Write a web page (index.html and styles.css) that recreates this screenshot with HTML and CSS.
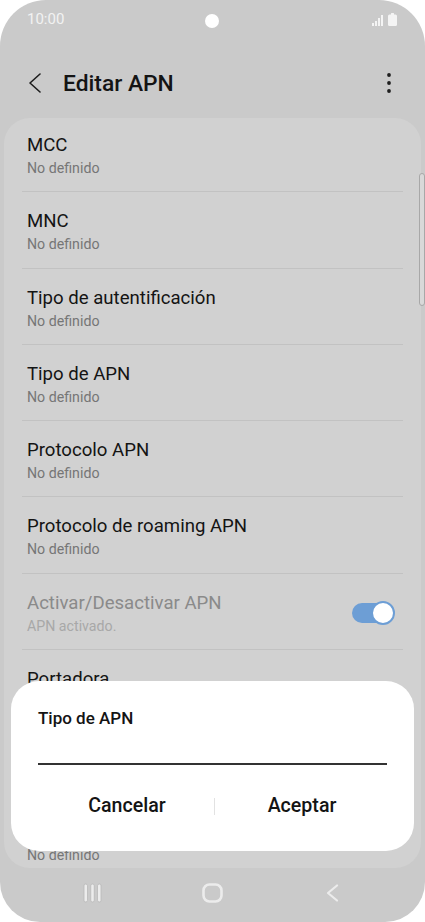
FILE: index.html
```html
<!DOCTYPE html>
<html lang="es">
<head>
    <meta charset="UTF-8">
    <meta name="viewport" content="width=device-width, initial-scale=1.0">
    <title>Editar APN</title>
    <link rel="stylesheet" href="styles.css">
</head>
<body>
    <div class="screen">
        <div class="status-bar">
            <span class="clock">10:00</span>
            <span class="camera"></span>
            <span class="status-icons">
                <svg width="12" height="11" viewBox="0 0 12 11">
                    <rect x="0" y="8" width="2" height="3" fill="#f4f4f4"/>
                    <rect x="3" y="6" width="2" height="5" fill="#f4f4f4"/>
                    <rect x="6" y="3" width="2" height="8" fill="#f4f4f4"/>
                    <rect x="9" y="0" width="2" height="11" fill="#f4f4f4"/>
                </svg>
                <svg width="9" height="13" viewBox="0 0 9 13">
                    <rect x="3" y="0" width="3" height="2" rx="0.5" fill="#f4f4f4"/>
                    <rect x="0" y="1.5" width="9" height="11.5" rx="1.5" fill="#f4f4f4"/>
                </svg>
            </span>
        </div>

        <header class="app-bar">
            <svg class="back" width="14" height="20" viewBox="0 0 14 20">
                <polyline points="12,1 2,10 12,19" fill="none" stroke="#1e1e1e" stroke-width="1.6" stroke-linecap="round" stroke-linejoin="round"/>
            </svg>
            <h1>Editar APN</h1>
            <svg class="more" width="6" height="20" viewBox="0 0 6 20">
                <circle cx="3" cy="2" r="1.9" fill="#1e1e1e"/>
                <circle cx="3" cy="10" r="1.9" fill="#1e1e1e"/>
                <circle cx="3" cy="18" r="1.9" fill="#1e1e1e"/>
            </svg>
        </header>

        <div class="list-card">
            <div class="item">
                <div class="item-title">MCC</div>
                <div class="item-sub">No definido</div>
            </div>
            <div class="item">
                <div class="item-title">MNC</div>
                <div class="item-sub">No definido</div>
            </div>
            <div class="item">
                <div class="item-title">Tipo de autentificación</div>
                <div class="item-sub">No definido</div>
            </div>
            <div class="item">
                <div class="item-title">Tipo de APN</div>
                <div class="item-sub">No definido</div>
            </div>
            <div class="item">
                <div class="item-title">Protocolo APN</div>
                <div class="item-sub">No definido</div>
            </div>
            <div class="item">
                <div class="item-title">Protocolo de roaming APN</div>
                <div class="item-sub">No definido</div>
            </div>
            <div class="item item-switch disabled">
                <div class="item-text">
                    <div class="item-title">Activar/Desactivar APN</div>
                    <div class="item-sub">APN activado.</div>
                </div>
                <span class="toggle"><span class="knob"></span></span>
            </div>
            <div class="item">
                <div class="item-title">Portadora</div>
                <div class="item-sub">No especificado</div>
            </div>
            <div class="item">
                <div class="item-title">Tipo MVNO</div>
                <div class="item-sub">Ninguno</div>
            </div>
            <div class="item">
                <div class="item-title">Valor MVNO</div>
                <div class="item-sub">No definido</div>
            </div>
        </div>

        <nav class="nav-bar">
            <svg width="19" height="20" viewBox="0 0 19 20">
                <rect x="1" y="1" width="3.5" height="18" rx="1.75" fill="#ececec" stroke="#b9b9b9" stroke-width="0.8"/>
                <rect x="7.75" y="1" width="3.5" height="18" rx="1.75" fill="#ececec" stroke="#b9b9b9" stroke-width="0.8"/>
                <rect x="14.5" y="1" width="3.5" height="18" rx="1.75" fill="#ececec" stroke="#b9b9b9" stroke-width="0.8"/>
            </svg>
            <svg width="21" height="20" viewBox="0 0 21 20">
                <rect x="1.5" y="1.5" width="18" height="17" rx="6" fill="none" stroke="#ececec" stroke-width="2.6"/>
            </svg>
            <svg width="13" height="18" viewBox="0 0 13 18">
                <polyline points="11,1.5 2,9 11,16.5" fill="none" stroke="#ececec" stroke-width="2.2" stroke-linecap="round" stroke-linejoin="round"/>
            </svg>
        </nav>

        <div class="scrollbar"></div>

        <div class="dialog">
            <div class="dialog-title">Tipo de APN</div>
            <div class="dialog-field"></div>
            <div class="dialog-actions">
                <button type="button" class="btn-text">Cancelar</button>
                <span class="actions-divider"></span>
                <button type="button" class="btn-text">Aceptar</button>
            </div>
        </div>
    </div>
</body>
</html>
```

FILE: styles.css
```css
body {
    margin: 0;
    padding: 0;
    background: #fff;
    font-family: Roboto, "Noto Sans", Arial, sans-serif;
    color: #141414;
}
.screen {
    position: relative;
    width: 425px;
    height: 922px;
    background: #cacaca;
    border-radius: 46px 46px 40px 40px;
    overflow: hidden;
    display: flex;
    flex-direction: column;
}
.status-bar {
    height: 38px;
    display: grid;
    grid-template-columns: 1fr auto 1fr;
    align-items: center;
    padding: 0 28px 0 27px;
}
.clock {
    font-size: 15px;
    color: #f2f2f2;
    margin-top: -1px;
}
.camera {
    width: 14px;
    height: 14px;
    border-radius: 50%;
    background: #fff;
    margin-top: 3px;
}
.status-icons {
    justify-self: end;
    display: flex;
    align-items: flex-end;
    gap: 4px;
    margin-top: 1px;
}
.app-bar {
    height: 80px;
    box-sizing: border-box;
    padding: 10px 33px 0 28px;
    display: flex;
    align-items: center;
}
.app-bar .back {
    margin-right: 21px;
}
.app-bar h1 {
    flex: 1;
    margin: 0;
    font-size: 22.8px;
    font-weight: 500;
    color: #141414;
}
.list-card {
    height: 750px;
    margin: 0 4px;
    background: #d1d1d1;
    border-radius: 26px;
    overflow: hidden;
}
.item {
    margin: 0 18px;
    padding: 17px 5px 14.3px;
    border-bottom: 1px solid #c2c2c2;
}
.item:first-child {
    padding-top: 15px;
}
.item-title {
    font-size: 18.6px;
    line-height: 24px;
    color: #141414;
}
.item-sub {
    margin-top: 2px;
    font-size: 14.2px;
    line-height: 18px;
    color: #767676;
}
.item-switch {
    display: flex;
    align-items: center;
    justify-content: space-between;
}
.disabled .item-title {
    color: #8a8a8a;
}
.disabled .item-sub {
    color: #a8a8a8;
}
.toggle {
    position: relative;
    width: 43px;
    height: 24px;
    margin-right: 3px;
    margin-top: 1px;
}
.toggle::before {
    content: "";
    position: absolute;
    left: 0;
    right: 4px;
    top: 2px;
    height: 20px;
    border-radius: 10px;
    background: #6d9ed5;
}
.knob {
    position: absolute;
    right: 0;
    top: 0;
    width: 20px;
    height: 20px;
    border-radius: 50%;
    background: #fff;
    border: 2px solid #6d9ed5;
}
.nav-bar {
    flex: 1;
    display: grid;
    grid-template-columns: repeat(3, 120px);
    justify-content: center;
    justify-items: center;
    align-items: center;
    padding-bottom: 4px;
}
.scrollbar {
    position: absolute;
    left: 419px;
    top: 173px;
    width: 6px;
    height: 133px;
    box-sizing: border-box;
    border: 1px solid #a8a8a8;
    border-radius: 3px;
    background: #d9d9d9;
}
.dialog {
    position: absolute;
    left: 11px;
    top: 681px;
    width: 403px;
    height: 170px;
    box-sizing: border-box;
    padding-top: 26px;
    background: #fff;
    border-radius: 28px;
}
.dialog-title {
    margin: 0 27px;
    font-size: 17px;
    line-height: 22px;
    font-weight: 500;
    color: #141414;
}
.dialog-field {
    height: 34px;
    margin: 0 27px;
    border-bottom: 2px solid #333;
}
.dialog-actions {
    display: flex;
    align-items: center;
    padding: 16px 25px 0 29px;
}
.btn-text {
    flex: 1;
    height: 50px;
    border: none;
    background: none;
    padding: 0;
    font-family: inherit;
    font-size: 19.6px;
    line-height: 24px;
    font-weight: 500;
    color: #141414;
}
.actions-divider {
    width: 1px;
    height: 17px;
    background: #e2e2e2;
}
```
